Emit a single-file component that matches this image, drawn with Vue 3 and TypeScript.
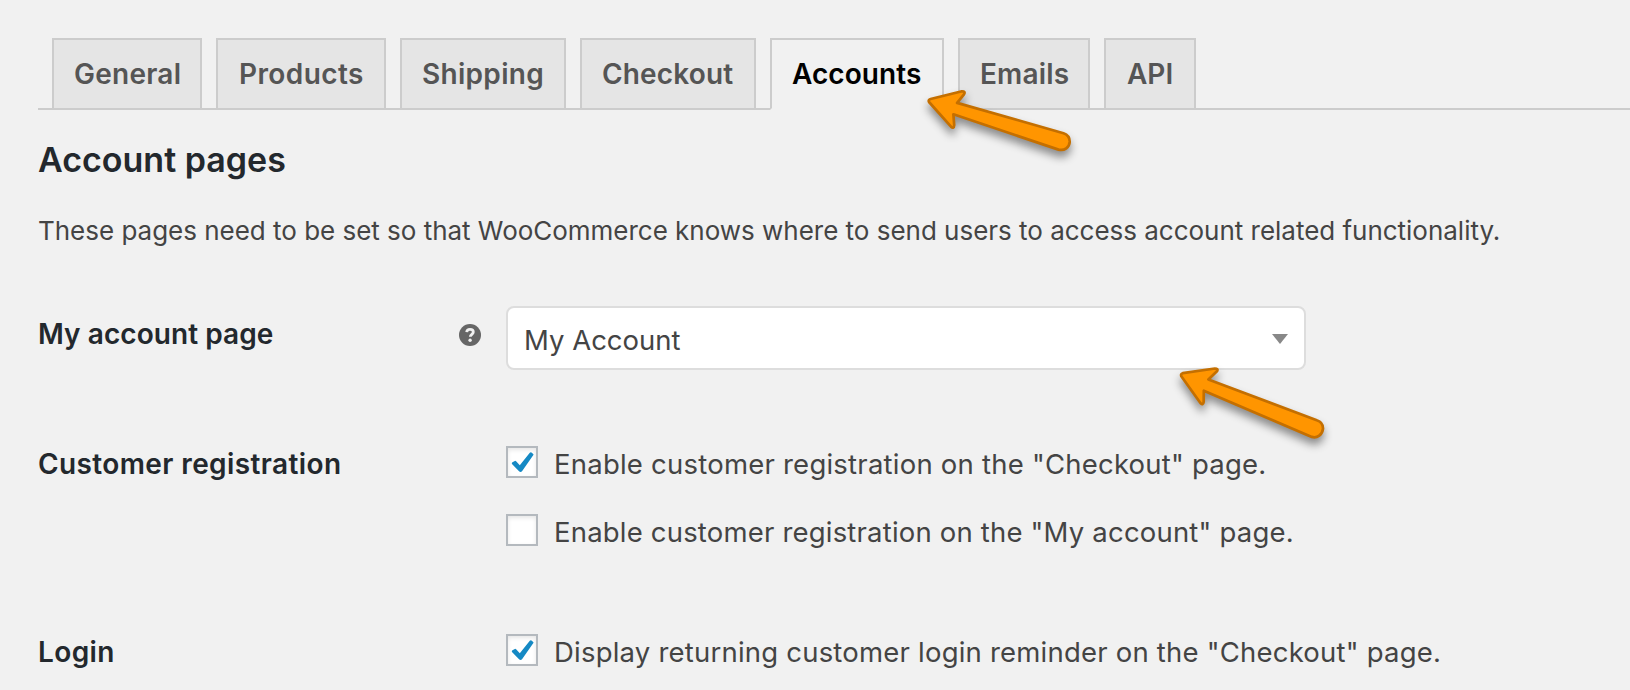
<script setup lang="ts">
import { ref } from 'vue'

interface Tab { id: string; label: string }
interface Option { id: string; label: string; checked: boolean }

const tabs: Tab[] = [
  { id: 'general', label: 'General' },
  { id: 'products', label: 'Products' },
  { id: 'shipping', label: 'Shipping' },
  { id: 'checkout', label: 'Checkout' },
  { id: 'accounts', label: 'Accounts' },
  { id: 'emails', label: 'Emails' },
  { id: 'api', label: 'API' },
]
const active = ref('accounts')

const registration = ref<Option[]>([
  { id: 'reg-checkout', label: 'Enable customer registration on the "Checkout" page.', checked: true },
  { id: 'reg-account', label: 'Enable customer registration on the "My account" page.', checked: false },
])
const login = ref<Option[]>([
  { id: 'login-reminder', label: 'Display returning customer login reminder on the "Checkout" page.', checked: true },
])

const groups = [
  { title: 'Customer registration', name: 'registration', options: registration },
  { title: 'Login', name: 'login', options: login },
]
</script>

<template>
  <main class="settings">
    <nav class="tabs">
      <a
        v-for="tab in tabs"
        :key="tab.id"
        :class="['tab', `tab-${tab.id}`, { active: tab.id === active }]"
        @click="active = tab.id"
      >{{ tab.label }}</a>
    </nav>

    <h2 class="title">Account pages</h2>
    <p class="description">These pages need to be set so that WooCommerce knows where to send users to access account related functionality.</p>

    <section class="row row-page">
      <h3 class="label label-page">My account page</h3>
      <svg class="help" viewBox="0 0 22 22">
        <circle cx="11" cy="11" r="11" fill="#666" />
        <path d="M7.7 8.1C7.9 6.2 9.1 5.4 11 5.4c2 0 3.3 1 3.3 2.6 0 2.3-3 2.3-3 4.8" fill="none" stroke="#f1f1f1" stroke-width="2.8" />
        <circle cx="11.1" cy="16.2" r="1.7" fill="#f1f1f1" />
      </svg>
      <div class="select">
        <span>My Account</span>
        <svg class="caret" viewBox="0 0 16 10"><path d="M0 0H16L8 10Z" fill="#888" /></svg>
      </div>
    </section>

    <section v-for="group in groups" :key="group.name" :class="['row', `row-${group.name}`]">
      <h3 :class="['label', `label-${group.name}`]">{{ group.title }}</h3>
      <div class="options">
        <label
          v-for="option in group.options.value"
          :key="option.id"
          :class="['option', option.id]"
          @click="option.checked = !option.checked"
        >
          <span class="box">
            <svg v-if="option.checked" viewBox="0 0 28 28">
              <path d="M4.1 14.6 6.8 12.9Q7.5 12.6 8.1 13.3L11.8 17.3 21.8 4.8Q22.6 3.8 23.5 4.5L25.2 5.9Q25.9 6.4 25.2 7.3L14.2 23.1Q12.7 24.8 10.8 23.1L4.2 16.3Q3.3 15.2 4.1 14.6Z" fill="#1589c4" />
            </svg>
          </span>
          <span class="text">{{ option.label }}</span>
        </label>
      </div>
    </section>

    <svg class="arrows" viewBox="0 0 1630 690">
      <g fill="#ff9500" stroke="#c46f00" stroke-width="2.7" stroke-linejoin="round">
        <path d="M930.6 99 961.9 91.3Q965.8 91.2 964 94.4L957.1 102.9 1063.5 133.2C1067.6 134.6 1069.8 137.8 1069.7 141.9 1069.4 147.4 1064.6 151.1 1058.5 149.6L953.4 114.3 954.2 125Q953.8 129.3 951 126.7L929 102Q928 99.8 930.6 99Z" />
        <path d="M1182.7 373.2 1214.9 368.5Q1218.4 368.5 1217.2 371L1208.4 379.4 1316.8 420.2C1321.2 421.6 1323.1 424.8 1323 428.6 1322.5 434.5 1317.2 438.6 1311.8 436.9L1203.8 390.7 1203.7 401.8Q1203.2 405.5 1200.6 403.2L1181.3 376.2Q1180.4 373.9 1182.7 373.2Z" />
      </g>
    </svg>
  </main>
</template>

<style>
body {
  background: #f1f1f1;
}
</style>

<style scoped>
.settings {
  position: relative;
  box-sizing: border-box;
  width: 100%;
  height: 690px;
  padding: 38px 0 0 38px;
  overflow: hidden;
  background: #f1f1f1;
  color: #444;
  font-family: Inter, "Open Sans", sans-serif;
}
h2, h3, p {
  margin: 0;
}
.tabs {
  display: flex;
  gap: 14px;
  height: 70px;
  padding-left: 14px;
  border-bottom: 2px solid #ccc;
}
.tab {
  box-sizing: border-box;
  height: 70px;
  padding: 10px 0 0 20px;
  border: 2px solid #ccc;
  border-bottom: 0;
  background: #e5e5e5;
  color: #555;
  font-size: 28px;
  font-weight: 600;
  line-height: 48px;
  white-space: nowrap;
  cursor: pointer;
}
.tab.active {
  height: 72px;
  border-bottom: 2px solid #f1f1f1;
  background: #f1f1f1;
  color: #000;
}
.tab-general { width: 150px; letter-spacing: 0.25px; }
.tab-products { width: 170px; padding-left: 21px; letter-spacing: 0.4px; }
.tab-shipping { width: 166px; letter-spacing: 0.3px; }
.tab-checkout { width: 176px; letter-spacing: 0.15px; }
.tab-accounts { width: 174px; letter-spacing: 0.05px; }
.tab-emails { width: 132px; letter-spacing: 0.15px; }
.tab-api { width: 92px; padding-left: 21px; }
.title {
  margin-top: 30px;
  color: #23282d;
  font-size: 34px;
  font-weight: 600;
  line-height: 40px;
}
.description {
  margin-top: 31px;
  font-size: 26px;
  line-height: 40px;
  letter-spacing: -0.018px;
  white-space: nowrap;
}
.row {
  display: grid;
  grid-template-columns: 421px 47px 1fr;
  align-items: start;
}
.row-page {
  margin-top: 55px;
}
.row-registration {
  margin-top: 74px;
}
.row-login {
  margin-top: 80px;
}
.label {
  color: #23282d;
  font-size: 28px;
  font-weight: 600;
  line-height: 40px;
  white-space: nowrap;
}
.label-page {
  padding-top: 8px;
  letter-spacing: 0.06px;
}
.label-registration {
  letter-spacing: 0.39px;
}
.label-login {
  letter-spacing: 0.4px;
}
.help {
  display: block;
  width: 22px;
  height: 22px;
  margin-top: 18px;
}
.row-page .help {
  justify-self: start;
}
.select {
  display: flex;
  align-items: center;
  justify-content: space-between;
  box-sizing: border-box;
  width: 800px;
  height: 64px;
  padding: 0 16px;
  border: 2px solid #ddd;
  border-radius: 8px;
  background: #fff;
  font-size: 27.5px;
  line-height: 56px;
}
.select span {
  padding-top: 4px;
}
.caret {
  width: 16px;
  height: 10px;
  margin-top: 2px;
}
.options {
  grid-column: 3;
  display: flex;
  flex-direction: column;
  gap: 28px;
}
.option {
  display: flex;
  align-items: flex-start;
  gap: 16px;
  height: 40px;
  font-size: 27.5px;
  line-height: 40px;
  white-space: nowrap;
}
.box {
  box-sizing: border-box;
  width: 32px;
  height: 32px;
  margin-top: 2px;
  border: 2px solid #b4b9be;
  background: #fff;
  box-shadow: inset 0 2px 4px rgba(0, 0, 0, 0.1);
}
.box svg {
  display: block;
  width: 28px;
  height: 28px;
}
.reg-checkout { letter-spacing: 0.225px; }
.reg-account { letter-spacing: 0.19px; }
.login-reminder { letter-spacing: 0.21px; }
.arrows {
  position: absolute;
  top: 0;
  left: 0;
  width: 1630px;
  height: 690px;
  pointer-events: none;
}
.arrows path {
  filter: drop-shadow(0 6px 4px rgba(0, 0, 0, 0.42));
}
</style>
